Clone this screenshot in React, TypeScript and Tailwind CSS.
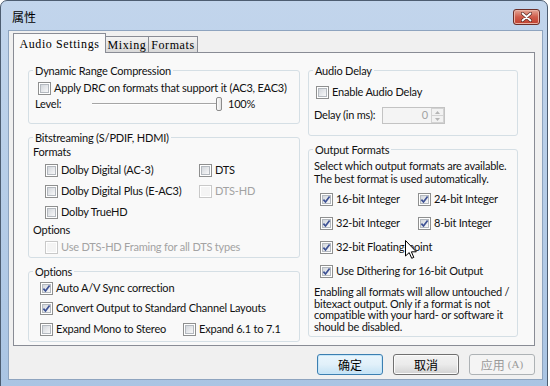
import React from 'react';

function CheckBox({ checked = false, disabled = false }: { checked?: boolean; disabled?: boolean }) {
  return (
    <span
      className={`relative flex h-[13px] w-[13px] shrink-0 items-center justify-center border bg-white ${
        disabled ? 'border-[#c9c9c9]' : 'border-[#8e8f8f]'
      }`}
    >
      <span
        className={`h-[9px] w-[9px] ${
          disabled ? 'bg-[#f4f4f4]' : 'border border-[#b4b9bf] bg-linear-to-br from-[#d3d7dc] to-[#f8f8f9]'
        }`}
      />
      {checked && (
        <svg className="absolute left-0 top-0" width="11" height="11" viewBox="0 0 11 11">
          <path d="M2.4 5.6 L4.5 8 L8.6 2.4" fill="none" stroke="#3d5194" strokeWidth="1.7" />
        </svg>
      )}
    </span>
  );
}

function Check({
  label,
  checked,
  disabled,
  className = '',
}: {
  label: string;
  checked?: boolean;
  disabled?: boolean;
  className?: string;
}) {
  return (
    <div className={`flex items-center ${className}`}>
      <CheckBox checked={checked} disabled={disabled} />
      <span className={`ml-[3px] whitespace-nowrap ${disabled ? 'text-[#a3a3a3]' : ''}`}>{label}</span>
    </div>
  );
}

function Group({ title, className = '', children }: { title: string; className?: string; children: React.ReactNode }) {
  return (
    <fieldset className={`min-w-0 shrink-0 rounded-[3px] border border-[#d5dfe5] ${className}`}>
      <legend className="ml-[4px] px-[2px] leading-[15px]">{title}</legend>
      {children}
    </fieldset>
  );
}

function CloseButton() {
  return (
    <div className="mr-[3px] mt-[8px] flex h-[16px] w-[27px] items-center justify-center rounded-[3px] border border-[#6b2e28] bg-linear-to-b from-[#e3a697] via-[#cf5c4b] to-[#c0402f] shadow-[inset_0_0_0_1px_#eab3a6]">
      <svg width="11" height="10" viewBox="0 0 11 10">
        <path d="M1.5 1.5 L9.5 8.5 M9.5 1.5 L1.5 8.5" stroke="#5a2a25" strokeWidth="3.2" strokeLinecap="round" />
        <path d="M1.5 1.5 L9.5 8.5 M9.5 1.5 L1.5 8.5" stroke="#ffffff" strokeWidth="1.8" strokeLinecap="round" />
      </svg>
    </div>
  );
}

export default function App() {
  return (
    <div className="relative h-[386px] w-[550px] overflow-hidden bg-white font-['Lato',sans-serif] text-[11px] tracking-[-0.2px] text-[#111]">
      <div className="flex h-[400px] w-[548px] flex-col rounded-t-[7px] border border-[#4d5d71] bg-linear-to-b from-[#c2d5ec] to-[#a9c4e3] pl-[7px] pr-[4px]">
        {/* title bar */}
        <div className="flex h-[29px] shrink-0 items-start justify-between">
          <span className="mt-[8px] pl-[4px] font-['Noto_Sans_CJK_SC',sans-serif] text-[12px] leading-[16px] tracking-normal text-black">
            属性
          </span>
          <CloseButton />
        </div>

        {/* client area */}
        <div className="flex h-[350px] w-[535px] shrink-0 flex-col border border-[#8ea4bf] bg-[#f0f0f0] pl-[4px] pr-[7px] pt-[2px]">
          {/* tabs */}
          <div className="flex h-[19px] items-end font-['Liberation_Serif',serif] text-[12px] tracking-[0.6px] text-black">
            <div className="relative z-10 -mb-px flex h-[20px] w-[93px] items-center justify-center border border-b-0 border-[#898c95] bg-[#f9f9f9]">
              Audio Settings
            </div>
            <div className="flex h-[16px] w-[43px] items-center justify-center border border-b-0 border-l-0 border-[#898c95] bg-linear-to-b from-[#f3f3f3] to-[#d9d9d9]">
              Mixing
            </div>
            <div className="flex h-[16px] w-[49px] items-center justify-center border border-b-0 border-l-0 border-[#898c95] bg-linear-to-b from-[#f3f3f3] to-[#d9d9d9]">
              Formats
            </div>
          </div>

          {/* tab page */}
          <div className="flex h-[294px] w-[522px] shrink-0 gap-[8px] border border-[#898c95] bg-[#f9f9f9] pl-[14px] pt-[10px]">
            {/* left column */}
            <div className="flex w-[272px] flex-col">
              <Group title="Dynamic Range Compression" className="h-[61px]">
                <Check className="ml-[9px] mt-[2px] h-[16px]" label="Apply DRC on formats that support it (AC3, EAC3)" />
                <div className="flex h-[16px] items-center">
                  <span className="ml-[6px] w-[57px]">Level:</span>
                  <div className="relative h-[16px] w-[130px]">
                    <div className="absolute left-0 right-[4px] top-[7px] h-[2px] border-t border-b border-t-[#a6a6a6] border-b-[#ffffff]" />
                    <div className="absolute right-0 top-[1px] h-[14px] w-[6px] rounded-[2px] border border-[#8b8b8b] bg-linear-to-r from-[#fdfdfd] to-[#e2e2e2]" />
                  </div>
                  <span className="ml-[6px]">100%</span>
                </div>
              </Group>

              <Group title="Bitstreaming (S/PDIF, HDMI)" className="mt-[6px] h-[128px]">
                <div className="ml-[4px] flex h-[14px] items-center">Formats</div>
                <div className="mt-[1px] flex h-[21px] items-center">
                  <Check className="ml-[16px] w-[154px]" label="Dolby Digital (AC-3)" />
                  <Check label="DTS" />
                </div>
                <div className="flex h-[21px] items-center">
                  <Check className="ml-[16px] w-[154px]" label="Dolby Digital Plus (E-AC3)" />
                  <Check label="DTS-HD" disabled />
                </div>
                <div className="flex h-[21px] items-center">
                  <Check className="ml-[16px]" label="Dolby TrueHD" />
                </div>
                <div className="ml-[4px] flex h-[14px] items-center">Options</div>
                <Check className="ml-[16px] mt-[2px] h-[16px]" label="Use DTS-HD Framing for all DTS types" disabled />
              </Group>

              <Group title="Options" className="mt-[6px] h-[78px]">
                <Check className="ml-[11px] h-[19px]" label="Auto A/V Sync correction" checked />
                <Check className="ml-[11px] h-[21px]" label="Convert Output to Standard Channel Layouts" checked />
                <div className="flex h-[21px] items-center">
                  <Check className="ml-[11px] w-[143px]" label="Expand Mono to Stereo" />
                  <Check label="Expand 6.1 to 7.1" />
                </div>
              </Group>
            </div>

            {/* right column */}
            <div className="flex w-[210px] flex-col">
              <Group title="Audio Delay" className="h-[73px]">
                <Check className="ml-[7px] mt-[6px] h-[16px]" label="Enable Audio Delay" />
                <div className="mt-[6px] flex h-[19px] items-center">
                  <span className="ml-[5px] w-[68px] whitespace-nowrap">Delay (in ms):</span>
                  <div className="flex h-[17px] w-[63px] border border-[#c3c3c3] bg-[#f4f4f4]">
                    <span className="flex flex-1 items-center justify-end pr-[3px] text-[#a3a3a3]">0</span>
                    <div className="flex w-[13px] flex-col">
                      <div className="flex flex-1 items-center justify-center border border-[#d3d3d3] bg-[#f2f2f2]">
                        <svg width="5" height="3" viewBox="0 0 5 3">
                          <path d="M0 3 L2.5 0 L5 3 Z" fill="#b5b5b5" />
                        </svg>
                      </div>
                      <div className="flex flex-1 items-center justify-center border border-t-0 border-[#d3d3d3] bg-[#f2f2f2]">
                        <svg width="5" height="3" viewBox="0 0 5 3">
                          <path d="M0 0 L2.5 3 L5 0 Z" fill="#b5b5b5" />
                        </svg>
                      </div>
                    </div>
                  </div>
                </div>
              </Group>

              <Group title="Output Formats" className="mt-[6px] h-[195px]">
                <p className="ml-[5px] mt-[2px] whitespace-nowrap leading-[13px]">
                  Select which output formats are available.
                  <br />
                  The best format is used automatically.
                </p>
                <div className="mt-[2px] flex h-[24px] items-center">
                  <Check className="ml-[11px] w-[98px]" label="16-bit Integer" checked />
                  <Check label="24-bit Integer" checked />
                </div>
                <div className="flex h-[24px] items-center">
                  <Check className="ml-[11px] w-[98px]" label="32-bit Integer" checked />
                  <Check label="8-bit Integer" checked />
                </div>
                <Check className="ml-[11px] h-[24px]" label="32-bit Floating-point" checked />
                <Check className="ml-[11px] h-[24px]" label="Use Dithering for 16-bit Output" checked />
                <p className="ml-[5px] mt-[3px] whitespace-nowrap leading-[11.5px]">
                  Enabling all formats will allow untouched /
                  <br />
                  bitexact output. Only if a format is not
                  <br />
                  compatible with your hard- or software it
                  <br />
                  should be disabled.
                </p>
              </Group>
            </div>
          </div>

          {/* buttons */}
          <div className="mt-[8px] flex justify-end gap-[10px] font-['Noto_Sans_CJK_SC',sans-serif] text-[12px] tracking-normal">
            <button className="flex h-[21px] w-[66px] items-center justify-center rounded-[3px] border border-[#3c7fb1] bg-linear-to-b from-[#eaf6fd] via-[#e1f0fa] to-[#c4e2f4] text-black shadow-[inset_0_0_0_1px_#c6e6f9]">
              确定
            </button>
            <button className="flex h-[21px] w-[66px] items-center justify-center rounded-[3px] border border-[#707070] bg-linear-to-b from-[#f2f2f2] via-[#ebebeb] to-[#d2d2d2] text-black shadow-[inset_0_0_0_1px_#fbfbfb]">
              取消
            </button>
            <button className="flex h-[21px] w-[66px] items-center justify-center rounded-[3px] border border-[#adb2b5] bg-[#f4f4f4] text-[#9a9a9a]">
              应用<span className="ml-[3px] font-['Liberation_Serif',serif] text-[11px]">(A)</span>
            </button>
          </div>
        </div>
      </div>

      {/* mouse pointer */}
      <svg className="absolute left-[405px] top-[240px]" width="13" height="20" viewBox="0 0 13 20">
        <path d="M0.5 0.5 L0.5 16 L4.2 12.6 L6.7 18.3 L8.8 17.4 L6.4 11.8 L11.3 11.8 Z" fill="#ffffff" stroke="#000000" strokeWidth="1" strokeLinejoin="miter" />
      </svg>
    </div>
  );
}
